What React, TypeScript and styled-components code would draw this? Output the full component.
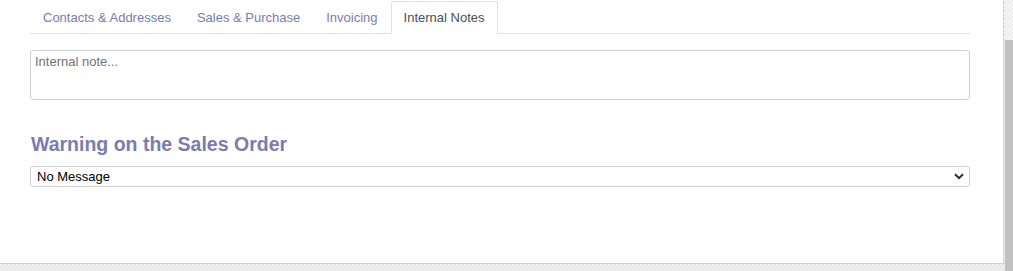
import React from "react";
import styled, { createGlobalStyle } from "styled-components";

const GlobalStyle = createGlobalStyle`
    html, body {
        margin: 0;
        padding: 0;
    }
    body {
        font-family: "Liberation Sans", Arial, sans-serif;
        font-size: 13px;
        color: #212529;
        background-color: #ececec;
        background-image: repeating-conic-gradient(#e4e4e4 0% 25%, #f2f2f2 0% 50%);
        background-size: 4px 4px;
    }
`;

const Screen = styled.div`
    display: flex;
    height: 271px;
    width: 1013px;
    overflow: hidden;
`;

const Sheet = styled.div`
    width: 1004px;
    height: 264px;
    box-sizing: border-box;
    background: #fff;
    border-right: 1px solid #d6d6de;
    border-bottom: 1px solid #cfcfd8;
    padding: 1px 33px 0 30px;
    display: flex;
    flex-direction: column;
`;

const Scrollbar = styled.div`
    flex: 1;
    display: flex;
    flex-direction: column;
    padding-left: 1px;
`;

const ScrollTrack = styled.div`
    height: 40px;
    background-image: repeating-conic-gradient(#ececec 0% 25%, #f6f6f6 0% 50%);
    background-size: 4px 4px;
`;

const ScrollThumb = styled.div`
    flex: 1;
    background: #c1c1c1;
`;

const Tabs = styled.ul`
    display: flex;
    list-style: none;
    margin: 0;
    padding: 0;
    border-bottom: 1px solid #dee2e6;
`;

const Tab = styled.li<{ $active?: boolean }>`
    padding: 8px 12px 7px;
    margin-bottom: -1px;
    line-height: 16px;
    border: 1px solid ${(p) => (p.$active ? "#dee2e6" : "transparent")};
    border-bottom-color: ${(p) => (p.$active ? "#fff" : "transparent")};
    border-radius: 3px 3px 0 0;
    background: ${(p) => (p.$active ? "#fff" : "transparent")};
    color: ${(p) => (p.$active ? "#495057" : "#7c7bad")};
    cursor: pointer;
    white-space: nowrap;
`;

const NoteArea = styled.textarea`
    margin-top: 16px;
    height: 50px;
    box-sizing: border-box;
    resize: none;
    border: 1px solid #cfcfcf;
    border-radius: 3px;
    padding: 3px 4px;
    font-family: "Liberation Sans", Arial, sans-serif;
    font-size: 13px;
    line-height: 16px;
    color: #212529;
    outline: none;
    &::placeholder {
        color: #727272;
    }
`;

const SectionTitle = styled.h2`
    margin: 32px 0 0 1px;
    font-size: 19.5px;
    line-height: 24px;
    font-weight: bold;
    color: #7c7bad;
`;

const SelectWrap = styled.div`
    position: relative;
    margin-top: 10px;
`;

const Select = styled.select`
    appearance: none;
    width: 100%;
    height: 21px;
    box-sizing: border-box;
    border: 1px solid #cfcfcf;
    border-radius: 3px;
    padding: 0 24px 0 6px;
    background: #fff;
    font-family: "Liberation Sans", Arial, sans-serif;
    font-size: 13px;
    color: #000;
    outline: none;
`;

const Chevron = styled.svg`
    position: absolute;
    right: 6px;
    top: 7px;
    pointer-events: none;
`;

export default function App() {
    return (
        <>
            <GlobalStyle />
            <Screen>
                <Sheet>
                    <Tabs>
                        <Tab>Contacts &amp; Addresses</Tab>
                        <Tab>Sales &amp; Purchase</Tab>
                        <Tab>Invoicing</Tab>
                        <Tab $active>Internal Notes</Tab>
                    </Tabs>
                    <NoteArea placeholder="Internal note..." />
                    <SectionTitle>Warning on the Sales Order</SectionTitle>
                    <SelectWrap>
                        <Select defaultValue="no-message">
                            <option value="no-message">No Message</option>
                            <option value="warning">Warning</option>
                            <option value="block">Blocking Message</option>
                        </Select>
                        <Chevron width="10" height="7" viewBox="0 0 10 7">
                            <path d="M1 1.2 L5 5.2 L9 1.2" fill="none" stroke="#2b2b33" strokeWidth="2" />
                        </Chevron>
                    </SelectWrap>
                </Sheet>
                <Scrollbar>
                    <ScrollTrack />
                    <ScrollThumb />
                </Scrollbar>
            </Screen>
        </>
    );
}
